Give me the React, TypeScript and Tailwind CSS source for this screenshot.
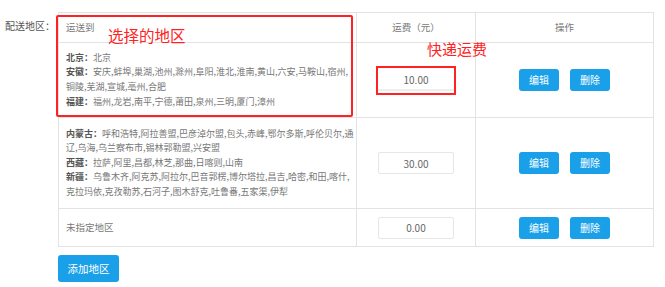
import React from 'react';

type Region = { province: string; cities: string[] };

const rows: { lines: { label?: string; text: string }[]; fee: string; annotated?: boolean }[] = [
    {
        lines: [
            { label: '北京', text: '北京' },
            { label: '安徽', text: '安庆,蚌埠,巢湖,池州,滁州,阜阳,淮北,淮南,黄山,六安,马鞍山,宿州,' },
            { text: '铜陵,芜湖,宣城,亳州,合肥' },
            { label: '福建', text: '福州,龙岩,南平,宁德,莆田,泉州,三明,厦门,漳州' },
        ],
        fee: '10.00',
        annotated: true,
    },
    {
        lines: [
            { label: '内蒙古', text: '呼和浩特,阿拉善盟,巴彦淖尔盟,包头,赤峰,鄂尔多斯,呼伦贝尔,通' },
            { text: '辽,乌海,乌兰察布市,锡林郭勒盟,兴安盟' },
            { label: '西藏', text: '拉萨,阿里,昌都,林芝,那曲,日喀则,山南' },
            { label: '新疆', text: '乌鲁木齐,阿克苏,阿拉尔,巴音郭楞,博尔塔拉,昌吉,哈密,和田,喀什,' },
            { text: '克拉玛依,克孜勒苏,石河子,图木舒克,吐鲁番,五家渠,伊犁' },
        ],
        fee: '30.00',
    },
];

const font = { fontFamily: '"Noto Sans CJK SC", "Noto Sans", sans-serif' };

function ActionButtons() {
    return (
        <div className="flex justify-center gap-[11px]">
            <button className="w-10 h-[22px] rounded-[3px] bg-[#1aa0e8] text-white text-[10px] leading-none">编辑</button>
            <button className="w-10 h-[22px] rounded-[3px] bg-[#1aa0e8] text-white text-[10px] leading-none">删除</button>
        </div>
    );
}

function FeeInput({ value, annotated }: { value: string; annotated?: boolean }) {
    return (
        <div className={`mx-auto w-[80px] h-[29px] flex items-center justify-center ${annotated ? 'border-2 border-[#f22]' : ''}`}>
            <div className={`w-[76px] h-[22px] flex items-center justify-center text-[10px] text-[#666] ${annotated ? 'border-b-2 border-[#eee]' : 'border border-[#e6e6e6] rounded-[2px]'}`}>
                {value}
            </div>
        </div>
    );
}

export default function App() {
    return (
        <div className="relative w-[665px] h-[287px] bg-white text-[#777]" style={font}>
            <div className="flex pt-3">
                <div className="w-[58px] pt-[6px] pl-[5px] text-[10px] text-[#555] whitespace-nowrap">配送地区：</div>

                <div>
                    <table className="border-collapse table-fixed w-[595px]">
                        <colgroup>
                            <col className="w-[298px]" />
                            <col className="w-[119px]" />
                            <col className="w-[178px]" />
                        </colgroup>
                        <thead>
                            <tr className="h-[30px] text-[9.5px] font-normal">
                                <th className="border border-[#e3e3e3] text-left font-normal pl-[7px]">运送到</th>
                                <th className="border border-[#e3e3e3] font-normal">运费（元）</th>
                                <th className="border border-[#e3e3e3] font-normal">操作</th>
                            </tr>
                        </thead>
                        <tbody>
                            {rows.map((row, i) => (
                                <tr key={i} className={i === 0 ? 'h-[75px]' : 'h-[91px]'}>
                                    <td className="border border-[#e3e3e3] pl-[7px] align-middle">
                                        {row.lines.map((line, j) => (
                                            <div key={j} className="text-[9px] leading-[14.6px] whitespace-nowrap">
                                                {line.label && <b className="text-[#555] font-bold">{line.label}：</b>}
                                                {line.text}
                                            </div>
                                        ))}
                                    </td>
                                    <td className="border border-[#e3e3e3] align-middle">
                                        <FeeInput value={row.fee} annotated={row.annotated} />
                                    </td>
                                    <td className="border border-[#e3e3e3] align-middle">
                                        <ActionButtons />
                                    </td>
                                </tr>
                            ))}
                            <tr className="h-[38px]">
                                <td className="border border-[#e3e3e3] pl-[7px] text-[9.5px]">未指定地区</td>
                                <td className="border border-[#e3e3e3]">
                                    <FeeInput value="0.00" />
                                </td>
                                <td className="border border-[#e3e3e3]">
                                    <ActionButtons />
                                </td>
                            </tr>
                        </tbody>
                    </table>

                    <button className="mt-2 w-[61px] h-[27px] rounded-[3px] bg-[#1aa0e8] text-white text-[10.5px]">添加地区</button>
                </div>
            </div>

            {/* annotations drawn over the table */}
            <div className="absolute left-[56px] top-[15px] w-[297px] h-[102px] border-2 border-[#f22] rounded-[2px] pointer-events-none" />
            <div className="absolute left-[108px] top-[24px] text-[15.5px] leading-[22px] text-[#f22]">选择的地区</div>
            <div className="absolute left-[427px] top-[38px] text-[15px] leading-[22px] text-[#f22]">快递运费</div>
        </div>
    );
}
